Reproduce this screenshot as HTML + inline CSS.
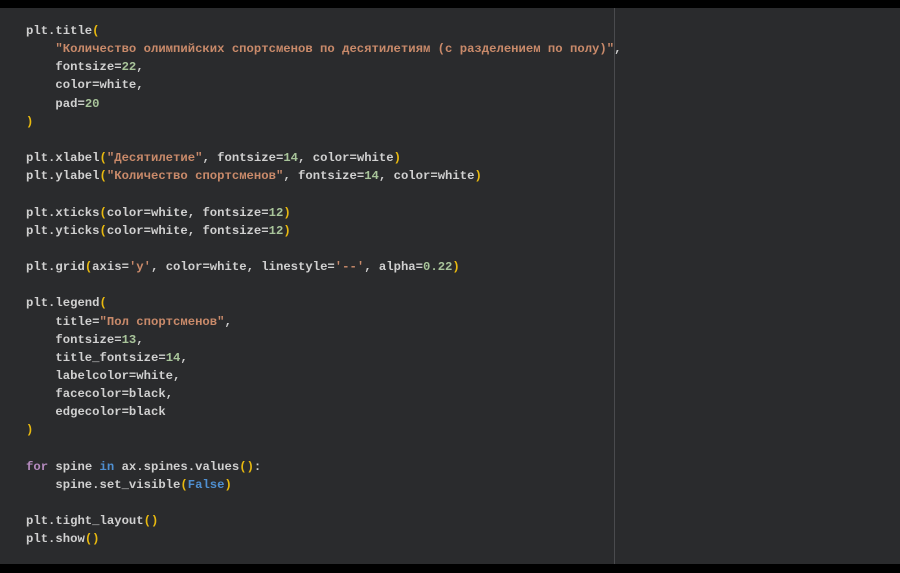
<!DOCTYPE html>
<html><head><meta charset="utf-8"><style>
html,body{margin:0;padding:0;background:#000;}
#wrap{position:relative;width:900px;height:573px;background:#000;overflow:hidden;}
#ed{position:absolute;left:0;top:8px;width:900px;height:556px;background:#2a2b2d;}
#vl{position:absolute;left:614px;top:0;width:1px;height:556px;background:#4a4b4e;}
pre{position:absolute;left:26px;top:14px;margin:0;font-family:"Liberation Mono","DejaVu Sans Mono",monospace;font-size:12.25px;line-height:18.15px;color:#d0d0d0;white-space:pre;font-weight:bold;}
.s{color:#c98a6a}.n{color:#a8c49a}.p{color:#e8b90f}.k{color:#b58bbf}.b{color:#4f8fd0}
</style></head><body><div id="wrap"><div id="ed"><div id="vl"></div>
<pre>plt.title<span class="p">(</span>
    <span class="s">"Количество олимпийских спортсменов по десятилетиям (с разделением по полу)"</span>,
    fontsize=<span class="n">22</span>,
    color=white,
    pad=<span class="n">20</span>
<span class="p">)</span>

plt.xlabel<span class="p">(</span><span class="s">"Десятилетие"</span>, fontsize=<span class="n">14</span>, color=white<span class="p">)</span>
plt.ylabel<span class="p">(</span><span class="s">"Количество спортсменов"</span>, fontsize=<span class="n">14</span>, color=white<span class="p">)</span>

plt.xticks<span class="p">(</span>color=white, fontsize=<span class="n">12</span><span class="p">)</span>
plt.yticks<span class="p">(</span>color=white, fontsize=<span class="n">12</span><span class="p">)</span>

plt.grid<span class="p">(</span>axis=<span class="s">'y'</span>, color=white, linestyle=<span class="s">'--'</span>, alpha=<span class="n">0.22</span><span class="p">)</span>

plt.legend<span class="p">(</span>
    title=<span class="s">"Пол спортсменов"</span>,
    fontsize=<span class="n">13</span>,
    title_fontsize=<span class="n">14</span>,
    labelcolor=white,
    facecolor=black,
    edgecolor=black
<span class="p">)</span>

<span class="k">for</span> spine <span class="b">in</span> ax.spines.values<span class="p">()</span>:
    spine.set_visible<span class="p">(</span><span class="b">False</span><span class="p">)</span>

plt.tight_layout<span class="p">()</span>
plt.show<span class="p">()</span></pre>
</div></div></body></html>
